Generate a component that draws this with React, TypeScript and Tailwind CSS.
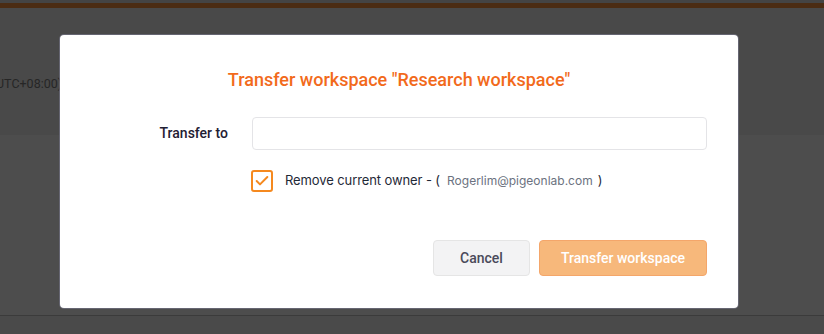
import { Check } from "lucide-react";

export default function App() {
  return (
    <div className="relative h-[334px] w-[824px] overflow-hidden bg-[#4a4a4a] font-['Roboto',sans-serif]">
      {/* page behind the overlay */}
      <div className="flex h-full flex-col">
        <div className="h-[3px] bg-[#444444]" />
        <div className="h-[5px] bg-[#4b2c13]" />
        <div className="flex h-[127px] items-center bg-[#494949] pt-[25px]">
          <span className="-ml-[4px] text-[12.5px] text-[#262626]">UTC+08:00)</span>
        </div>
        <div className="h-[180px] bg-[#4d4d4d]" />
        <div className="h-[1px] bg-[#3b3b3b]" />
        <div className="flex-1 bg-[#4a4a4a]" />
      </div>

      {/* modal */}
      <div className="absolute left-[60px] top-[35px] flex h-[273px] w-[678px] flex-col rounded-[4px] bg-white shadow-[0_0_0_1px_rgba(120,120,140,0.6)]">
        <h2 className="pt-[33px] text-center text-[18px] font-medium leading-[24px] text-[#f26a1b]">
          Transfer workspace "Research workspace"
        </h2>

        <div className="mt-[25px] flex items-center gap-[24px]">
          <label className="w-[168px] text-right text-[14px] font-medium text-[#1f2033]">Transfer to</label>
          <input
            type="text"
            className="h-[33px] w-[455px] rounded-[4px] border border-[#e4e4e7] px-3 text-[14px] outline-none"
          />
        </div>

        <div className="ml-[191px] mt-[20px] flex items-center font-['Inter',sans-serif]">
          <span className="flex h-[22px] w-[22px] items-center justify-center rounded-[3px] border-2 border-[#f5891f]">
            <Check className="h-[16px] w-[16px] text-[#f5891f]" strokeWidth={3} />
          </span>
          <span className="ml-[12px] text-[13px] tracking-[-0.1px] text-[#1f2937]">Remove current owner - (</span>
          <span className="ml-[7px] text-[12px] text-[#6b7280]">Rogerlim@pigeonlab.com</span>
          <span className="ml-[5px] text-[13px] text-[#1f2937]">)</span>
        </div>

        <div className="mr-[31px] mt-[48px] flex justify-end gap-[9px]">
          <button className="h-[36px] w-[97px] rounded-[4px] border border-[#e5e5e5] bg-[#f3f3f4] text-[14px] font-medium text-[#4a4a5a]">
            Cancel
          </button>
          <button className="h-[36px] w-[168px] rounded-[4px] border border-[#f4a66a] bg-[#f7b87b] text-[14px] font-medium text-white">
            Transfer workspace
          </button>
        </div>
      </div>
    </div>
  );
}
